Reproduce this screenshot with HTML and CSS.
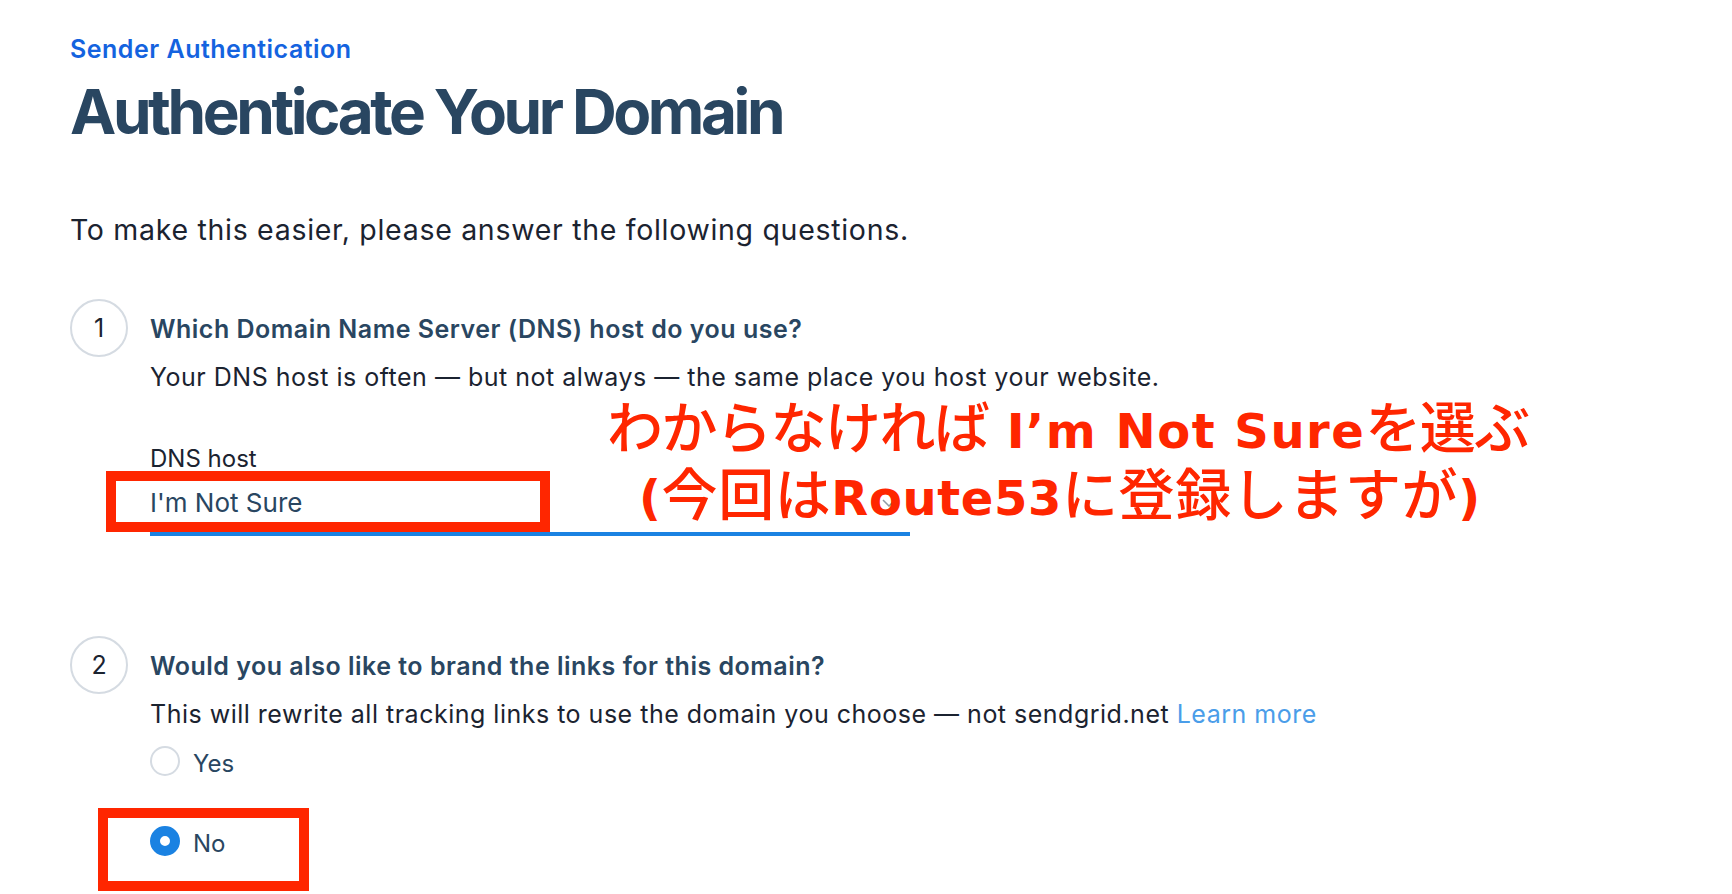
FILE: index.html
```html
<!DOCTYPE html>
<html lang="en">
<head>
<meta charset="utf-8">
<title>Authenticate Your Domain</title>
<link rel="stylesheet" href="styles.css">
</head>
<body>
<main class="page">
  <p class="eyebrow">Sender Authentication</p>
  <h1 class="title">Authenticate Your Domain</h1>
  <p class="intro">To make this easier, please answer the following questions.</p>

  <section class="question question-dns">
    <div class="step">1</div>
    <div class="qbody">
      <h2 class="qtitle">Which Domain Name Server (DNS) host do you use?</h2>
      <p class="qdesc">Your DNS host is often — but not always — the same place you host your website.</p>
      <div class="field">
        <label class="field-label">DNS host</label>
        <div class="select">
          <span class="select-value">I'm Not Sure</span>
          <svg class="chevron" width="14" height="8" viewBox="0 0 14 8"><path d="M1 1l6 6 6-6" fill="none" stroke="#8f9aa6" stroke-width="1.5"/></svg>
          <span class="mark mark-select"></span>
        </div>
      </div>
    </div>
    <div class="annotation" lang="ja">
      <div class="anno-line anno-line1"><span class="jp">わからなければ</span><span class="lat"> I’m Not Sure</span><span class="jp">を選ぶ</span></div>
      <div class="anno-line anno-line2"><span class="lat">(</span><span class="jp">今回は</span><span class="lat">Route53</span><span class="jp">に登録しますが</span><span class="lat">)</span></div>
    </div>
  </section>

  <section class="question question-links">
    <div class="step">2</div>
    <div class="qbody">
      <h2 class="qtitle">Would you also like to brand the links for this domain?</h2>
      <p class="qdesc">This will rewrite all tracking links to use the domain you choose — not sendgrid.net <a class="link" href="#">Learn more</a></p>
      <div class="radios">
        <div class="radio-row">
          <span class="radio"></span>
          <span class="radio-label">Yes</span>
        </div>
        <div class="radio-row">
          <span class="radio radio-checked"></span>
          <span class="radio-label">No</span>
          <span class="mark mark-radio"></span>
        </div>
      </div>
    </div>
  </section>
</main>
</body>
</html>
```

FILE: styles.css
```css
html, body {
  margin: 0;
  padding: 0;
  background: #ffffff;
}

body {
  font-family: Inter, "Noto Sans", sans-serif;
  color: #1b2330;
}

.page {
  padding: 34px 0 60px 70px;
}

.eyebrow {
  margin: 0;
  font-size: 25px;
  line-height: 30px;
  font-weight: 600;
  letter-spacing: 0.5px;
  color: #1463df;
}

.title {
  margin: 11.5px 0 0;
  font-size: 62px;
  line-height: 72px;
  font-weight: 700;
  letter-spacing: -0.055em;
  color: #294661;
}

.intro {
  margin: 64px 0 0;
  font-size: 28.5px;
  line-height: 36px;
  letter-spacing: 0.7px;
  color: #1b2330;
}

.question {
  position: relative;
  display: flex;
  align-items: flex-start;
  gap: 22px;
}

.question-dns {
  margin-top: 50px;
}

.question-links {
  margin-top: 99px;
}

.step {
  flex: 0 0 auto;
  margin-top: 1px;
  width: 54px;
  height: 54px;
  border: 2px solid #d5dbe2;
  border-radius: 50%;
  display: flex;
  align-items: center;
  justify-content: center;
  font-size: 25px;
  color: #1b2330;
}

.qbody {
  padding-top: 15.5px;
}

.qtitle {
  margin: 0;
  font-size: 25px;
  line-height: 32px;
  font-weight: 600;
  letter-spacing: 0.5px;
  color: #294661;
}

.qdesc {
  margin: 15.5px 0 0;
  font-size: 25px;
  line-height: 32px;
  letter-spacing: 0.5px;
  color: #1b2330;
}

.link {
  color: #4a9de9;
  text-decoration: none;
}

.field {
  margin-top: 52px;
  width: 760px;
}

.field-label {
  display: block;
  font-size: 24px;
  line-height: 28px;
  color: #1b2330;
}

.select {
  position: relative;
  display: flex;
  align-items: center;
  justify-content: space-between;
  padding: 12.5px 0 10.5px;
  border-bottom: 4px solid #1a82e2;
}

.select-value {
  font-size: 26px;
  line-height: 36px;
  color: #294661;
}

.chevron {
  margin-right: 14px;
}

.mark {
  position: absolute;
  border: 10px solid #ff2600;
  box-sizing: border-box;
  pointer-events: none;
}

.mark-select {
  left: -44px;
  top: -1.5px;
  width: 444px;
  height: 61px;
}

.annotation {
  position: absolute;
  left: 537px;
  top: 100px;
  font-family: "DejaVu Sans", sans-serif;
  font-size: 48px;
  font-weight: 700;
  line-height: 67px;
  color: #ff2600;
  z-index: 2;
}

.anno-line {
  white-space: nowrap;
}

.anno-line2 {
  padding-left: 32px;
  letter-spacing: 0.6px;
}

.jp {
  font-family: "Noto Sans CJK JP", sans-serif;
  font-size: 56px;
  font-weight: 500;
  line-height: 0;
}

.anno-line1 .jp {
  letter-spacing: -1.5px;
}

.lat {
  font-family: "DejaVu Sans", sans-serif;
  font-size: 48px;
  font-weight: 700;
  line-height: 0;
}

.anno-line1 .lat {
  letter-spacing: 1.5px;
}

.radios {
  margin-top: 16px;
  display: flex;
  flex-direction: column;
  gap: 47px;
}

.radio-row {
  position: relative;
  display: flex;
  align-items: flex-start;
  gap: 13px;
}

.radio {
  flex: 0 0 auto;
  width: 26px;
  height: 26px;
  border: 2px solid #d5dbe2;
  border-radius: 50%;
  background: #ffffff;
}

.radio-checked {
  width: 10px;
  height: 10px;
  border: 10px solid #1a82e2;
}

.radio-label {
  padding-top: 3px;
  font-size: 24px;
  line-height: 30px;
  color: #294661;
}

.mark-radio {
  left: -52px;
  top: -18px;
  width: 211px;
  height: 83px;
}
```
